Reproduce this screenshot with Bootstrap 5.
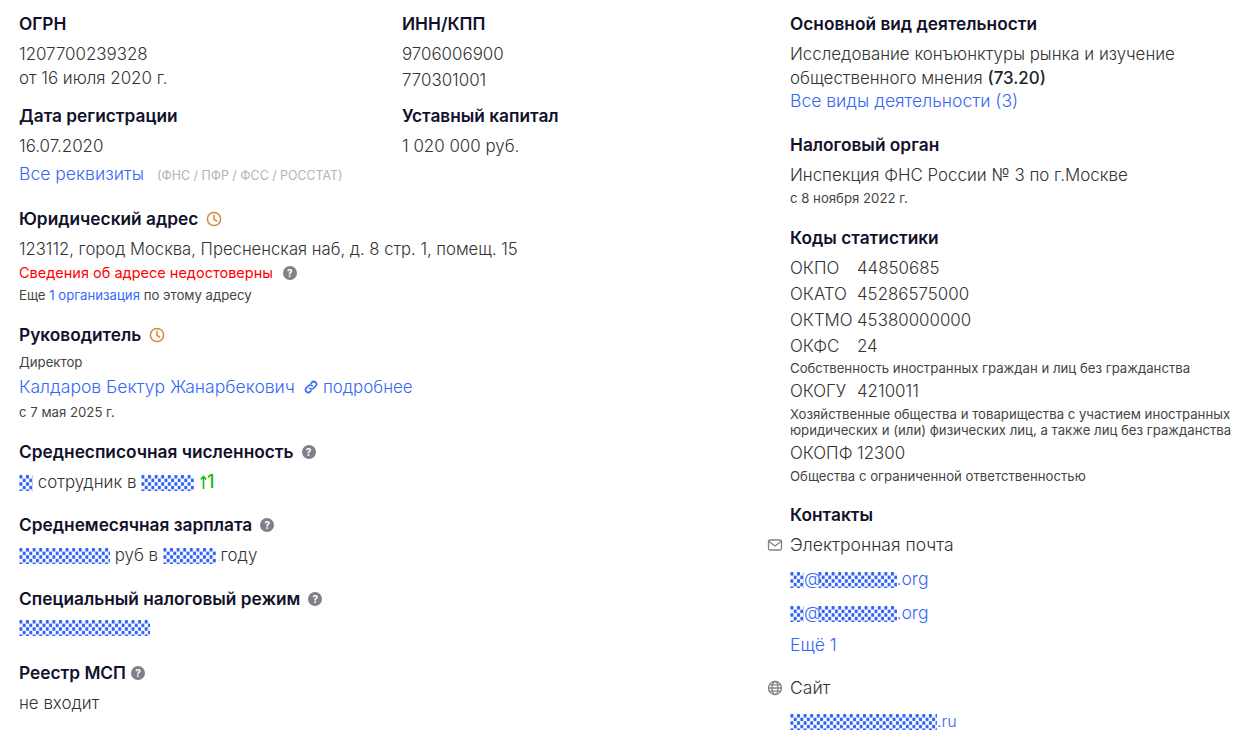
<!DOCTYPE html>
<html lang="ru">
<head>
<meta charset="utf-8">
<title>Реквизиты</title>
<link href="https://cdn.jsdelivr.net/npm/bootstrap@5.3.0/dist/css/bootstrap.min.css" rel="stylesheet">
<style>
body{font-family:"Inter","Liberation Sans",sans-serif;font-size:16.9px;font-weight:300;color:#333;background:#fff;line-height:26px;overflow:hidden}
a{color:#3568f5;text-decoration:none}
.page-wrap{padding:12px 0 0 19px;width:1249px}
.col-main{width:752px;flex:none}
.col-half{width:383px;flex:none}
.col-side{width:460px;flex:none;margin-left:19px}
.hd{font-size:17.3px;font-weight:600;line-height:24px;color:#11112b;margin-bottom:5px;display:flex;align-items:center;gap:8px}
.hd-near{gap:5px}
.val{line-height:26px}
.addr{font-size:16.65px}
.big{font-size:17.55px}
.reg{font-size:16.9px}
.lh24{line-height:24px;margin-top:-1px}
.sm14{font-size:14.5px;line-height:20px;font-weight:400}
.sm13{font-size:13.2px;line-height:20px;font-weight:400;color:#444}
.sm13t{font-size:13.2px;line-height:16px;font-weight:400;color:#444}
.tight{line-height:19px}
.bad{color:#f00;display:flex;align-items:center;gap:10px;margin-top:1px}
.gap-a{margin-top:14px}
.gap-b{margin-top:11px}
.gap17{margin-top:17px}
.gap18{margin-top:18px}
.gap19{margin-top:19px}
.gap20{margin-top:20px}
.gap21{margin-top:21px}
.gap2{margin-top:2px}
.gap6{margin-top:6px}
.gap7{margin-top:7px}
.gap8{margin-top:8px}
.lift2{margin-top:-2px}
.req-note{font-size:12.4px;font-weight:400;color:#b4b4b4;margin-left:8px}
.qm{width:14px;height:14px;border-radius:50%;background:#7e8189;color:#fff;font-size:10px;font-weight:700;line-height:14px;text-align:center;display:inline-block;flex:none}
.ic-clock{width:16px;height:16px;flex:none}
.dith{display:inline-block;height:16px;vertical-align:-3px;background-image:radial-gradient(circle,#2f62f5 1.6px,transparent 2px),radial-gradient(circle,#2f62f5 1.6px,transparent 2px);background-size:6.6px 7.2px;background-position:-1.4px -1.8px,1.9px 1.8px}
.d14{width:14px}.d53{width:53px}.d91{width:91px}.d131{width:131px}.d79{width:79px}.d147{width:147px}
.up{color:#14bb14;font-weight:500;margin-left:1px;font-size:18px}
.up svg{vertical-align:-1px}
.at-sign{letter-spacing:-2.5px;margin-right:-1px}
.name-row{gap:9px}
.more-link{gap:5px}
.code-k{display:inline-block;width:67px}
.icon-line{position:relative}
.side-ic{position:absolute;left:-23px;top:5px;width:16px;height:16px}
.site-tail{font-size:16px}
</style>
</head>
<body>
<div class="page-wrap d-flex">
  <div class="col-main">
    <div class="d-flex">
      <div class="col-half">
        <div class="hd">ОГРН</div>
        <div class="val">1207700239328</div>
        <div class="val lh24">от 16 июля 2020 г.</div>
        <div class="hd gap-a">Дата регистрации</div>
        <div class="val">16.07.2020</div>
      </div>
      <div class="col-half">
        <div class="hd">ИНН/КПП</div>
        <div class="val">9706006900</div>
        <div class="val">770301001</div>
        <div class="hd gap-b">Уставный капитал</div>
        <div class="val">1 020 000 руб.</div>
      </div>
    </div>
    <div class="val gap2 big"><a href="#">Все реквизиты</a> <span class="req-note">(ФНС / ПФР / ФСС / РОССТАТ)</span></div>

    <div class="hd gap18">Юридический адрес
      <svg class="ic-clock" viewBox="0 0 16 16" fill="none" stroke="#d08a3e" stroke-width="1.5"><circle cx="8" cy="8" r="6.6"/><path d="M8 4.2V8.4l2.6 1.6" stroke-linecap="round"/></svg>
    </div>
    <div class="val addr">123112, город Москва, Пресненская наб, д. 8 стр. 1, помещ. 15</div>
    <div class="sm14 bad">Сведения об адресе недостоверны <span class="qm">?</span></div>
    <div class="sm13 gap2">Еще <a href="#">1 организация</a> по этому адресу</div>

    <div class="hd gap18">Руководитель
      <svg class="ic-clock" viewBox="0 0 16 16" fill="none" stroke="#d08a3e" stroke-width="1.5"><circle cx="8" cy="8" r="6.6"/><path d="M8 4.2V8.4l2.6 1.6" stroke-linecap="round"/></svg>
    </div>
    <div class="sm13">Директор</div>
    <div class="val gap2 d-flex align-items-center name-row"><a href="#" class="big">Калдаров Бектур Жанарбекович</a>
      <a href="#" class="d-flex align-items-center more-link"><svg width="14" height="14" viewBox="0 0 16 16" fill="none" stroke="#3568f5" stroke-width="1.9" stroke-linecap="round"><path d="M6.6 9.4a3 3 0 0 0 4.3 0l2.4-2.4a3 3 0 0 0-4.3-4.3L8 3.7"/><path d="M9.4 6.6a3 3 0 0 0-4.3 0L2.7 9a3 3 0 0 0 4.3 4.3L8 12.3"/></svg>подробнее</a></div>
    <div class="sm13 gap2">с 7 мая 2025 г.</div>

    <div class="hd gap18">Среднесписочная численность <span class="qm">?</span></div>
    <div class="val"><span class="dith d14"></span> сотрудник в <span class="dith d53"></span> <span class="up"><svg width="7" height="14" viewBox="0 0 7 14" fill="none" stroke="#14bb14" stroke-width="1.6"><path d="M3.5 14V1.5M.8 4.5l2.7-3 2.7 3"/></svg>1</span></div>

    <div class="hd gap18">Среднемесячная зарплата <span class="qm">?</span></div>
    <div class="val"><span class="dith d91"></span> руб в <span class="dith d53"></span> году</div>

    <div class="hd gap19">Специальный налоговый режим <span class="qm">?</span></div>
    <div class="val lift2"><span class="dith d131"></span></div>

    <div class="hd hd-near gap21">Реестр МСП <span class="qm">?</span></div>
    <div class="val">не входит</div>
  </div>

  <div class="col-side">
    <div class="hd">Основной вид деятельности</div>
    <div class="val">Исследование конъюнктуры рынка и изучение</div>
    <div class="val lh24">общественного мнения <span class="text-dark fw-medium">(73.20)</span></div>
    <div class="val lh24 big"><a href="#">Все виды деятельности (3)</a></div>

    <div class="hd gap20">Налоговый орган</div>
    <div class="val">Инспекция ФНС России № 3 по г.Москве</div>
    <div class="sm13">с 8 ноября 2022 г.</div>

    <div class="hd gap18">Коды статистики</div>
    <div class="val"><span class="code-k">ОКПО</span>44850685</div>
    <div class="val"><span class="code-k">ОКАТО</span>45286575000</div>
    <div class="val"><span class="code-k">ОКТМО</span>45380000000</div>
    <div class="val"><span class="code-k">ОКФС</span>24</div>
    <div class="sm13 tight">Собственность иностранных граждан и лиц без гражданства</div>
    <div class="val"><span class="code-k">ОКОГУ</span>4210011</div>
    <div class="sm13t gap2">Хозяйственные общества и товарищества с участием иностранных<br>юридических и (или) физических лиц, а также лиц без гражданства</div>
    <div class="val gap2"><span class="code-k">ОКОПФ</span>12300</div>
    <div class="sm13">Общества с ограниченной ответственностью</div>

    <div class="hd gap17">Контакты</div>
    <div class="val icon-line big">
      <svg class="side-ic" viewBox="0 0 16 16" fill="none" stroke="#7e8189" stroke-width="1.3"><rect x="1.5" y="3" width="13" height="10" rx="1.5"/><path d="M2 4.5l6 4.5 6-4.5"/></svg>
      Электронная почта</div>
    <div class="val gap8 big"><a href="#"><span class="dith d14"></span><span class="at-sign">@</span><span class="dith d79"></span>.org</a></div>
    <div class="val gap8 big"><a href="#"><span class="dith d14"></span><span class="at-sign">@</span><span class="dith d79"></span>.org</a></div>
    <div class="val gap6 big"><a href="#">Ещё 1</a></div>
    <div class="val icon-line gap17 big">
      <svg class="side-ic" viewBox="0 0 16 16" fill="none" stroke="#7e8189" stroke-width="1.3"><circle cx="8" cy="8" r="6.5"/><ellipse cx="8" cy="8" rx="3" ry="6.5"/><path d="M1.5 8h13M2.5 4.8h11M2.5 11.2h11"/></svg>
      Сайт</div>
    <div class="val gap7 reg"><a href="#"><span class="dith d147"></span><span class="site-tail">.ru</span></a></div>
  </div>
</div>
<script src="https://cdn.jsdelivr.net/npm/bootstrap@5.3.0/dist/js/bootstrap.bundle.min.js"></script>
</body>
</html>
